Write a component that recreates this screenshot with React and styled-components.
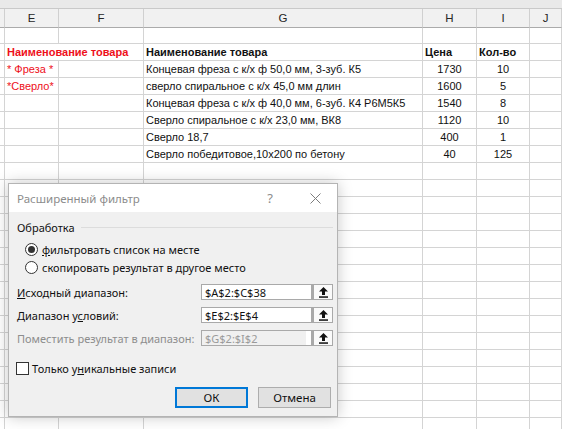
import React from 'react'
import styled, { createGlobalStyle } from 'styled-components'

const GlobalStyle = createGlobalStyle`
    body {
        margin: 0;
        overflow: hidden;
        background: #fff;
    }
`

const Page = styled.div`
    position: relative;
    width: 562px;
    height: 429px;
    overflow: hidden;
    background: #fff;
    font-family: "Liberation Sans", Arial, sans-serif;
`

const TopStrip = styled.div`
    height: 8px;
    background: #e9e9e9;
    border-bottom: 1px solid #c9c9c9;
`

const Sheet = styled.div`
    display: grid;
    grid-template-columns: 5px 54px 85px 279px 54px 53px 1fr;
`

const HeadCell = styled.div`
    box-sizing: border-box;
    height: 19px;
    background: #f1f1f1;
    border-right: 1px solid #d0d0d0;
    border-bottom: 1px solid #ababab;
    display: flex;
    align-items: center;
    justify-content: center;
    font-size: 11.5px;
    color: #262626;
`

const Cell = styled.div`
    box-sizing: border-box;
    height: ${p => p.$h || 17}px;
    border-right: 1px solid #d4d4d4;
    border-bottom: 1px solid #d4d4d4;
    padding: 0 2px;
    display: flex;
    align-items: center;
    justify-content: ${p => p.$center ? 'center' : 'flex-start'};
    white-space: nowrap;
    font-size: 11px;
    font-weight: ${p => p.$bold ? 700 : 400};
    color: ${p => p.$red ? '#ee0f1a' : '#111'};
    grid-column: ${p => p.$span ? `span ${p.$span}` : 'auto'};
`

const Dialog = styled.div`
    position: absolute;
    left: 8px;
    top: 183px;
    width: 330px;
    height: 234px;
    box-sizing: border-box;
    border: 1px solid #b4b4b4;
    background: #f0f0f0;
    box-shadow: 0 0 14px rgba(0, 0, 0, 0.22);
    display: flex;
    flex-direction: column;
    font-family: "Noto Sans", "Liberation Sans", sans-serif;
    font-size: 11px;
    color: #111;
`

const TitleBar = styled.div`
    height: 28px;
    background: #fff;
    display: flex;
    align-items: center;
    padding-left: 8px;
    color: #8c8c8c;
    font-size: 11.5px;
`

const Title = styled.span`
    flex: 1;
`

const Help = styled.span`
    width: 20px;
    text-align: center;
    font-size: 13px;
    color: #8c8c8c;
    margin-right: 28px;
`

const Close = styled.span`
    width: 14px;
    display: flex;
    align-items: center;
    justify-content: center;
    margin-right: 15px;
`

const Body = styled.div`
    flex: 1;
    display: flex;
    flex-direction: column;
    padding: 7px 4px 0 8px;
`

const GroupHead = styled.div`
    height: 16px;
    display: flex;
    align-items: center;

    &::after {
        content: '';
        flex: 1;
        margin: 0 0 0 6px;
        border-top: 1px solid #dcdcdc;
    }
`

const RadioRow = styled.label`
    height: 18px;
    display: flex;
    align-items: center;
    gap: 4px;
    padding-left: 8px;
    margin-top: ${p => p.$first ? 5 : 0}px;
`

const RadioMark = styled.span`
    box-sizing: border-box;
    width: 13px;
    height: 13px;
    border-radius: 50%;
    border: 1px solid #333;
    background: #fff;
    display: flex;
    align-items: center;
    justify-content: center;

    &::after {
        content: '';
        width: 7px;
        height: 7px;
        border-radius: 50%;
        background: ${p => p.$on ? '#333' : 'transparent'};
    }
`

const Fields = styled.div`
    margin-top: 8px;
    display: flex;
    flex-direction: column;
    gap: 7px;
`

const FieldRow = styled.div`
    display: grid;
    grid-template-columns: 184px 111px 21px;
    height: 16px;
    align-items: center;
    color: ${p => p.$disabled ? '#8d8d8d' : '#111'};
`

const Input = styled.div`
    box-sizing: border-box;
    height: 16px;
    border: 1px solid #a9a9a9;
    background: ${p => p.$disabled ? '#f0f0f0' : '#fff'};
    box-shadow: ${p => p.$disabled ? 'inset -5px 0 0 #fff' : 'none'};
    padding-left: 3px;
    display: flex;
    align-items: center;
    font-size: 11px;
    color: ${p => p.$disabled ? '#9a9a9a' : '#111'};
`

const PickButton = styled.div`
    box-sizing: border-box;
    height: 16px;
    border: 1px solid #a9a9a9;
    border-left-width: 2px;
    background: #fafafa;
    display: flex;
    align-items: center;
    justify-content: center;
`

const CheckRow = styled.label`
    margin-top: 15px;
    height: 14px;
    display: flex;
    align-items: center;
    gap: 3px;
    margin-left: -1px;
`

const CheckBox = styled.span`
    box-sizing: border-box;
    width: 13px;
    height: 13px;
    border: 1px solid #333;
    background: #fff;
`

const Buttons = styled.div`
    margin-top: 12px;
    display: flex;
    justify-content: flex-end;
    gap: 10px;
    padding-right: 2px;
`

const Button = styled.div`
    box-sizing: border-box;
    width: 73px;
    height: 21px;
    background: #e1e1e1;
    border: ${p => p.$primary ? '2px solid #0078d7' : '1px solid #adadad'};
    display: flex;
    align-items: center;
    justify-content: center;
    font-size: 11.5px;
`

const UpArrow = () => (
    <svg width="9" height="11" viewBox="0 0 9 11">
        <path d="M4.5 0 L9 4.5 L6 4.5 L6 8 L3 8 L3 4.5 L0 4.5 Z" fill="#111" />
        <rect x="0" y="9.3" width="9" height="1.5" fill="#111" />
    </svg>
)

const CloseIcon = () => (
    <svg width="11" height="11" viewBox="0 0 11 11">
        <path d="M0.5 0.5 L10.5 10.5 M10.5 0.5 L0.5 10.5" stroke="#7d7d7d" strokeWidth="1" />
    </svg>
)

const letters = ['', 'E', 'F', 'G', 'H', 'I', 'J']

const items = [
    ['* Фреза *', 'Концевая фреза с к/х ф 50,0 мм, 3-зуб. К5', 1730, 10],
    ['*Сверло*', 'сверло спиральное с к/х 45,0 мм длин', 1600, 5],
    ['', 'Концевая фреза с к/х ф 40,0 мм, 6-зуб. К4 Р6М5К5', 1540, 8],
    ['', 'Сверло спиральное с к/х 23,0 мм, ВК8', 1120, 10],
    ['', 'Сверло 18,7', 400, 1],
    ['', 'Сверло победитовое,10х200 по бетону', 40, 125],
]

const emptyRows = 16

const App = () => {
    const renderEmpty = (key, h) => letters.map((l, i) => <Cell key={key + '-' + i} $h={h} />)

    return (
        <Page>
            <GlobalStyle />
            <TopStrip />
            <Sheet>
                {letters.map((l, i) => <HeadCell key={'h' + i}>{l}</HeadCell>)}

                {renderEmpty('r1', 16)}

                <Cell />
                <Cell $red $bold $span={2}>Наименование товара</Cell>
                <Cell $bold>Наименование товара</Cell>
                <Cell $bold>Цена</Cell>
                <Cell $bold>Кол-во</Cell>
                <Cell />

                {items.map((it, r) => (
                    <React.Fragment key={'it' + r}>
                        <Cell />
                        <Cell $red>{it[0]}</Cell>
                        <Cell />
                        <Cell>{it[1]}</Cell>
                        <Cell $center>{it[2]}</Cell>
                        <Cell $center>{it[3]}</Cell>
                        <Cell />
                    </React.Fragment>
                ))}

                {Array.from({ length: emptyRows }).map((_, r) => renderEmpty('e' + r))}
            </Sheet>

            <Dialog>
                <TitleBar>
                    <Title>Расширенный фильтр</Title>
                    <Help>?</Help>
                    <Close><CloseIcon /></Close>
                </TitleBar>
                <Body>
                    <GroupHead>Обработка</GroupHead>
                    <RadioRow $first>
                        <RadioMark $on />
                        <span><u>ф</u>ильтровать список на месте</span>
                    </RadioRow>
                    <RadioRow>
                        <RadioMark />
                        <span>скопировать результат в <u>д</u>ругое место</span>
                    </RadioRow>

                    <Fields>
                        <FieldRow>
                            <span><u>И</u>сходный диапазон:</span>
                            <Input>$A$2:$C$38</Input>
                            <PickButton><UpArrow /></PickButton>
                        </FieldRow>
                        <FieldRow>
                            <span>Диапазон у<u>с</u>ловий:</span>
                            <Input>$E$2:$E$4</Input>
                            <PickButton><UpArrow /></PickButton>
                        </FieldRow>
                        <FieldRow $disabled>
                            <span>Поместить результат в диапазон:</span>
                            <Input $disabled>$G$2:$I$2</Input>
                            <PickButton><UpArrow /></PickButton>
                        </FieldRow>
                    </Fields>

                    <CheckRow>
                        <CheckBox />
                        <span>Только у<u>н</u>икальные записи</span>
                    </CheckRow>

                    <Buttons>
                        <Button $primary>ОК</Button>
                        <Button>Отмена</Button>
                    </Buttons>
                </Body>
            </Dialog>
        </Page>
    )
}

export default App
